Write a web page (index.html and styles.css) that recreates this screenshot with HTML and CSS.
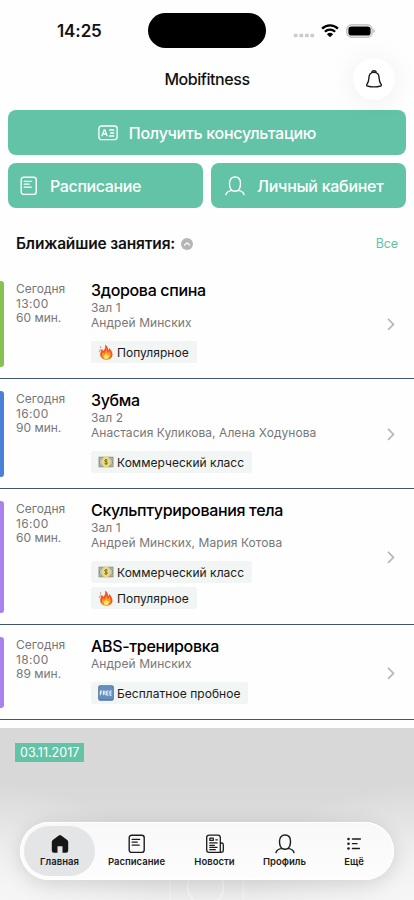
FILE: index.html
```html
<!DOCTYPE html>
<html lang="ru">
<head>
<meta charset="utf-8">
<meta name="viewport" content="width=device-width, initial-scale=1">
<title>Mobifitness</title>
<link rel="stylesheet" href="styles.css">
</head>
<body>
<svg class="sprite" aria-hidden="true">
  <symbol id="doc" viewBox="0 0 18 20"><g fill="none" stroke="currentColor" stroke-linecap="round"><rect x="1.2" y="1.2" width="15" height="17.2" rx="2.4" stroke-width="1.4"/><path d="M4.2 5.4h7.4M4.2 8.2h5M4.2 11.2h7" stroke-width="1.3"/></g></symbol>
  <symbol id="person" viewBox="0 0 20 20"><path d="M1 18.6c.5-2.4 2.6-3.6 5.8-4.2 1.8.9 4.600.9 6.400 0 3.200.6 5.300 1.800 5.800 4.200M6.900 14.300C5.200 12.900 4.500 10.600 4.500 7.200 4.500 3.400 6.600 1 10 1s5.500 2.400 5.500 6.200c0 3.400-.7 5.700-2.400 7.100" fill="none" stroke="currentColor" stroke-width="1.4" stroke-linecap="round"/></symbol>
  <symbol id="chevron" viewBox="0 0 8 13"><path d="M1.500 1.300l5 5-5 5" fill="none" stroke="#bababc" stroke-width="1.800" stroke-linecap="round" stroke-linejoin="round"/></symbol>
  <symbol id="fire" viewBox="0 0 16 16"><path d="M7 .5c2.600 1.500 3.200 3.700 3.200 5.700.7-.5 1-1.300 1-2.200 2 2 3.300 4.300 3.300 6.400 0 3.200-2.700 5.200-6.100 5.200-3.600 0-6.200-2.100-6.200-5.300C2.200 8 3.300 6.900 3.700 4.800c.9.700 1.300 1.400 1.400 2.300C7 5.400 7.700 3.200 7 .5z" fill="#f4512c"/><path d="M8.300 4.500c.4 2.300 1 3.200 1.300 4.500.8-.5 1.300-1.200 1.500-2.100 1 1.400 1.800 2.800 1.800 4.200 0 2.500-2 4.200-4.500 4.200s-4.500-1.500-4.500-3.800c0-1.600.7-2.600 1.100-3.500.5.500.8 1 .9 1.600 1.500-1.300 2.400-3 2.400-5.100z" fill="#fb9b22"/><path d="M8.300 9.200c.3 1.300 1.100 1.600 1.400 2.400l.9-.9c.6 2.700-.4 4.400-2.200 4.400-1.700 0-2.900-1-2.700-2.600.1-1.200 2.200-1.600 2.600-3.300z" fill="#ffe567"/><path d="M2.300 5.500L1.400 7.400M2.600 2.800v.8" stroke="#f4713c" stroke-linecap="round"/></symbol>
  <symbol id="cash" viewBox="0 0 16 16"><path d="M.5 2.700h15v10.600H.5z" fill="#979b86"/><path d="M1.700 3.900h12.600v8.200H1.700z" fill="#c9cbb7"/><path d="M4 3.900L1.700 6v4L4 12.100M12 3.900L14.300 6v4L12 12.100" fill="none" stroke="#8e927e"/><path d="M5.400 2.700h5.200v10.600H5.400z" fill="#ead77a"/><circle cx="8" cy="8" r="3.700" fill="#f4de6c"/><path d="M9.500 6.200c-.7-.6-2.800-.7-2.800.5 0 1.300 2.800.9 2.800 2.300 0 1.200-2.100 1.200-3 .4M8 5v6" fill="none" stroke="#66603c" stroke-width=".9"/></symbol>
</svg>
<div class="screen">
  <header class="status">
    <div class="clock"><span class="t">14:25</span></div>
    <div class="island"></div>
    <div class="signals">
      <svg width="22" height="5" viewBox="0 0 22 5" fill="#cbcbcb"><rect x="0.700" y=".7" width="3.900" height="3.600" rx="1.200"/><rect x="6.300" y=".7" width="3.900" height="3.600" rx="1.200"/><rect x="11.900" y=".7" width="3.900" height="3.600" rx="1.200"/><rect x="17.300" y=".7" width="3.900" height="3.600" rx="1.200"/></svg>
      <svg class="wifi" width="18" height="14" viewBox="0 0 18 14"><path d="M1.100 4.600a11.300 11.300 0 0 1 15.800 0M3.900 7.700a7.200 7.200 0 0 1 10.200 0" fill="none" stroke="#000" stroke-width="2.300"/><path d="M9 13.200L5.900 10.200a4.500 4.500 0 0 1 6.200 0z"/></svg>
      <svg class="battery" width="30" height="14" viewBox="0 0 30 14"><rect x=".9" y=".9" width="25.200" height="12.200" rx="4.200" fill="none" stroke="#a3a3a3"/><rect x="2.400" y="2.400" width="22.200" height="9.200" rx="2.800"/><path d="M27.500 5c1.600.5 1.600 3.500 0 4z" fill="#a3a3a3"/></svg>
    </div>
  </header>
  <div class="titlebar">
    <h1><span class="t">Mobifitness</span></h1>
    <button class="bell" aria-label="Уведомления"><svg width="18" height="20" viewBox="0 0 18 20"><path d="M6.800 3.700C6.900 1 11.100 1 11.200 3.700M9 3.400c-3.300 0-5 2.300-5.100 5.600-.1 3.900-.6 4.700-2.100 6.700-.4.600-.2 1.100.5 1.300 4.200 1.100 9.200 1.100 13.400 0 .7-.2.900-.7.500-1.300-1.500-2-2-2.800-2.100-6.700C14 5.700 12.300 3.400 9 3.400z" fill="none" stroke="#1a1a1a" stroke-width="1.400" stroke-linejoin="round"/></svg></button>
  </div>
  <div class="actions">
    <button class="btn wide"><svg width="20" height="16" viewBox="0 0 20 16" fill="none" stroke="#fff" stroke-width="1.300" stroke-linecap="round" stroke-linejoin="round"><rect x=".9" y="1" width="18.200" height="13.700" rx="2.600"/><path d="M4 10.800L6.100 5h.8L9 10.800M4.700 9h3.600M11.600 5h4.200M12.600 8h3.200M11.600 11h4.200"/></svg><span class="t consult">Получить консультацию</span></button>
    <button class="btn sched"><svg width="18" height="20"><use href="#doc"/></svg><span class="t">Расписание</span></button>
    <button class="btn cab"><svg width="20" height="20"><use href="#person"/></svg><span class="t">Личный кабинет</span></button>
  </div>
  <div class="heading">
    <h2><span class="t">Ближайшие занятия:</span></h2>
    <svg width="12" height="12" viewBox="0 0 12 12"><circle cx="6" cy="6" r="6" fill="#b6b6b8"/><path d="M3.500 7L6 4.900 8.500 7" fill="none" stroke="#fff" stroke-width="1.200" stroke-linecap="round"/></svg>
    <a class="all"><span class="t">Все</span></a>
  </div>
  <main class="list">
    <article class="row green">
      <div class="when"><p>Сегодня</p><p class="hour">13:00</p><p>60 мин.</p></div>
      <div class="info"><h3><span class="t">Здорова спина</span></h3><p>Зал 1</p><p><span class="t">Андрей Минских</span></p>
        <div class="chips"><span class="chip"><svg width="16" height="16"><use href="#fire"/></svg><span class="t">Популярное</span></span></div></div>
      <svg class="go" width="8" height="13"><use href="#chevron"/></svg>
    </article>
    <article class="row blue">
      <div class="when"><p>Сегодня</p><p class="hour">16:00</p><p>90 мин.</p></div>
      <div class="info"><h3><span class="t">Зубма</span></h3><p>Зал 2</p><p><span class="t">Анастасия Куликова, Алена Ходунова</span></p>
        <div class="chips"><span class="chip"><svg width="16" height="16"><use href="#cash"/></svg><span class="t">Коммерческий класс</span></span></div></div>
      <svg class="go" width="8" height="13"><use href="#chevron"/></svg>
    </article>
    <article class="row violet">
      <div class="when"><p>Сегодня</p><p class="hour">16:00</p><p>60 мин.</p></div>
      <div class="info"><h3><span class="t">Скульптурирования тела</span></h3><p>Зал 1</p><p><span class="t">Андрей Минских, Мария Котова</span></p>
        <div class="chips"><span class="chip"><svg width="16" height="16"><use href="#cash"/></svg><span class="t">Коммерческий класс</span></span><span class="chip"><svg width="16" height="16"><use href="#fire"/></svg><span class="t">Популярное</span></span></div></div>
      <svg class="go" width="8" height="13"><use href="#chevron"/></svg>
    </article>
    <article class="row violet">
      <div class="when"><p>Сегодня</p><p class="hour">18:00</p><p>89 мин.</p></div>
      <div class="info"><h3><span class="t">ABS-тренировка</span></h3><p>Андрей Минских</p>
        <div class="chips"><span class="chip"><svg width="16" height="16" viewBox="0 0 16 16"><rect x=".2" y=".2" width="15.600" height="15.600" rx="2" fill="#4d6f98"/><rect x="1" y="1" width="14" height="13.500" rx="1.500" fill="#6490bf"/><path d="M2.300 10.200V6h2M2.300 8h1.700M5.400 10.200V6h1.300q1.200 1.100 0 2.200H5.400M6.500 8.200l1 2M10.500 6H8.700v4.200h1.800M8.700 8h1.600M13.700 6h-1.800v4.200h1.800M11.900 8h1.600" fill="none" stroke="#fff" stroke-width=".9"/></svg><span class="t">Бесплатное пробное</span></span></div></div>
      <svg class="go" width="8" height="13"><use href="#chevron"/></svg>
    </article>
  </main>
  <section class="news">
    <time><span class="t">03.11.2017</span></time>
    <svg class="placeholder" width="76" height="60" viewBox="0 0 76 60" fill="none" stroke="#fff" stroke-width="1.500"><path d="M1 60V1h73.500v59" opacity=".3"/><circle cx="36.500" cy="47" r="18" opacity=".45"/></svg>
  </section>
  <nav class="tabs">
    <a class="tab active"><svg width="20" height="20" viewBox="0 0 20 20"><path d="M8.800 1.500q1.200-.8 2.400 0l6 4.600q1 .8 1 2v8.400q0 2.300-2.200 2.300h-3.500v-6.500h-5v6.500H4q-2.200 0-2.200-2.300V8.100q0-1.200 1-2z" fill="#161616"/></svg><span class="t">Главная</span></a>
    <a class="tab"><svg width="18" height="20"><use href="#doc"/></svg><span class="t">Расписание</span></a>
    <a class="tab"><svg width="20" height="20" viewBox="0 0 20 20" fill="none" stroke="currentColor" stroke-width="1.300" stroke-linecap="round" stroke-linejoin="round"><path d="M15.300 18.400H4q-2.300 0-2.300-2.300V3.500Q1.700 1.200 4 1.200h9q2.300 0 2.300 2.300zV9h1.200q1.800 0 1.800 1.800v5.800q0 1.800-1.500 1.800t-1.500-1.800"/><rect x="4.900" y="4.200" width="3.400" height="2.200"/><path d="M10.800 5.800h1.500M4.800 8.900h7.300M4.800 11.400h4.500M4.800 13.300h7.300M4.800 15.700h5.500"/></svg><span class="t">Новости</span></a>
    <a class="tab"><svg width="20" height="20"><use href="#person"/></svg><span class="t">Профиль</span></a>
    <a class="tab"><svg width="18" height="20" viewBox="0 0 18 20"><g fill="currentColor"><circle cx="3.500" cy="5" r="1.300"/><circle cx="3.500" cy="9.700" r="1.300"/><circle cx="3.500" cy="14.500" r="1.300"/></g><path d="M7.400 5h8M7.400 9.700H12M7.400 14.500h7" stroke="currentColor" stroke-width="1.300" stroke-linecap="round"/></svg><span class="t">Ещё</span></a>
  </nav>
</div>
</body>
</html>
```
FILE: styles.css
```css
* { box-sizing: border-box; }
body, h1, h2, h3, p { margin: 0; }
body { font-family: Inter, "Liberation Sans", sans-serif; color: #111; background: #fff; }
button { border: 0; padding: 0; font: inherit; }
svg { display: block; flex: none; }
.sprite { position: absolute; width: 0; height: 0; }
.t { white-space: nowrap; }
.screen { position: relative; width: 414px; height: 900px; overflow: hidden; display: flex; flex-direction: column; background: #fefefe; }

.status { height: 48px; padding-top: 13px; display: flex; flex: none; }
.clock { width: 148px; padding-left: 57px; font-size: 17px; line-height: 36px; font-weight: 600; letter-spacing: -0.1px; }
.island { width: 118px; height: 35px; border-radius: 18px; background: #000; }
.signals { display: flex; height: 35px; align-items: center; padding-left: 27px; }
.signals > :first-child { margin-top: 9px; }
.wifi { margin-left: 6px; }
.battery { margin-left: 7px; }

.titlebar { height: 62px; flex: none; display: grid; grid-template-columns: 61px 1fr 61px; align-items: center; }
h1 { grid-column: 2; text-align: center; font-size: 16px; font-weight: 500; line-height: 20px; letter-spacing: -.45px; }
.bell { width: 42px; height: 42px; border-radius: 50%; background: #fff; display: flex; align-items: center; justify-content: center; position: relative; z-index: 2; box-shadow: 0 2px 30px rgba(0,0,0,.07); }

.actions { display: grid; grid-template-columns: 1fr 1fr; gap: 8px; padding: 0 8px; flex: none; height: 98px; }
.btn { height: 45px; border-radius: 8px; background: #63c3a6; color: #fff; font-size: 16px; font-weight: 500; letter-spacing: -.28px; display: flex; align-items: center; }
.wide { grid-column: 1 / 3; justify-content: center; gap: 11px; }
.sched { padding-left: 12px; gap: 12px; letter-spacing: -.38px; }
.cab { padding-left: 14px; gap: 12px; }

.heading { height: 61px; flex: none; display: flex; align-items: center; padding: 10px 16px 0; }
h2 { font-size: 15.500px; font-weight: 600; line-height: 20px; letter-spacing: -.17px; margin-right: 6px; }
.all { margin-left: auto; font-size: 12.500px; letter-spacing: -.1px; color: #63c3a6; }

.list { flex: none; }
.row { display: flex; align-items: stretch; padding: 12px 19px 15px 0; border-bottom: 1px solid #40566f; }
.row::before { content: ""; width: 4px; margin: 0 12px -4px 0; border-radius: 0 3px 3px 0; background: var(--mark); }
.green { --mark: #86c251; }
.blue { --mark: #4a80d8; }
.violet { --mark: #aa82ee; }
.when { width: 75px; padding-top: 1px; font-size: 12px; line-height: 14.700px; color: #777779; }
.hour { letter-spacing: .35px; }
.info { flex: 1; }
h3 { font-size: 16px; line-height: 19px; font-weight: 500; letter-spacing: -.33px; color: #000; }
.info p { font-size: 12px; line-height: 15px; color: #777779; letter-spacing: .06px; }
.chips { display: flex; flex-direction: column; align-items: flex-start; gap: 4px; margin-top: 11px; }
.chip { display: flex; align-items: center; gap: 3px; height: 22px; padding: 0 8px 0 7px; border-radius: 3px; background: #f1f5f4; font-size: 12px; color: #1b1b1b; letter-spacing: .04px; }
.go { align-self: center; margin-top: 5px; }

.news { position: relative; margin-top: 8px; height: 172px; flex: none; padding: 15px; background: radial-gradient(ellipse 38% 68% at 0 100%, #f6f6f6 0, rgba(246,246,246,0) 100%), radial-gradient(ellipse 38% 68% at 100% 100%, #f6f6f6 0, rgba(246,246,246,0) 100%), linear-gradient(#d8d8d8 0 32%, #dbdbdb 55%, #eee 100%); }
time { display: flex; width: fit-content; align-items: center; height: 19px; padding: 0 5px; background: #63c3a6; color: #fff; font-size: 12.500px; }
.placeholder { position: absolute; left: 169px; bottom: 0; }

.tabs { position: absolute; left: 20px; top: 822px; width: 374px; height: 58px; border-radius: 29px; padding: 4px; display: grid; grid-template-columns: 71px 83px 73px 67px 72px; background: linear-gradient(#f8f8f8, #fdfdfd); box-shadow: 0 4px 20px rgba(0,0,0,.13), inset 0 0 0 1px #fff; }
.tab { display: flex; flex-direction: column; align-items: center; padding-top: 8px; gap: 1px; font-size: 9.500px; line-height: 13px; font-weight: 600; letter-spacing: .02px; color: #1c1c1c; border-radius: 25px; }
.active { background: #e4e5e6; }
```
